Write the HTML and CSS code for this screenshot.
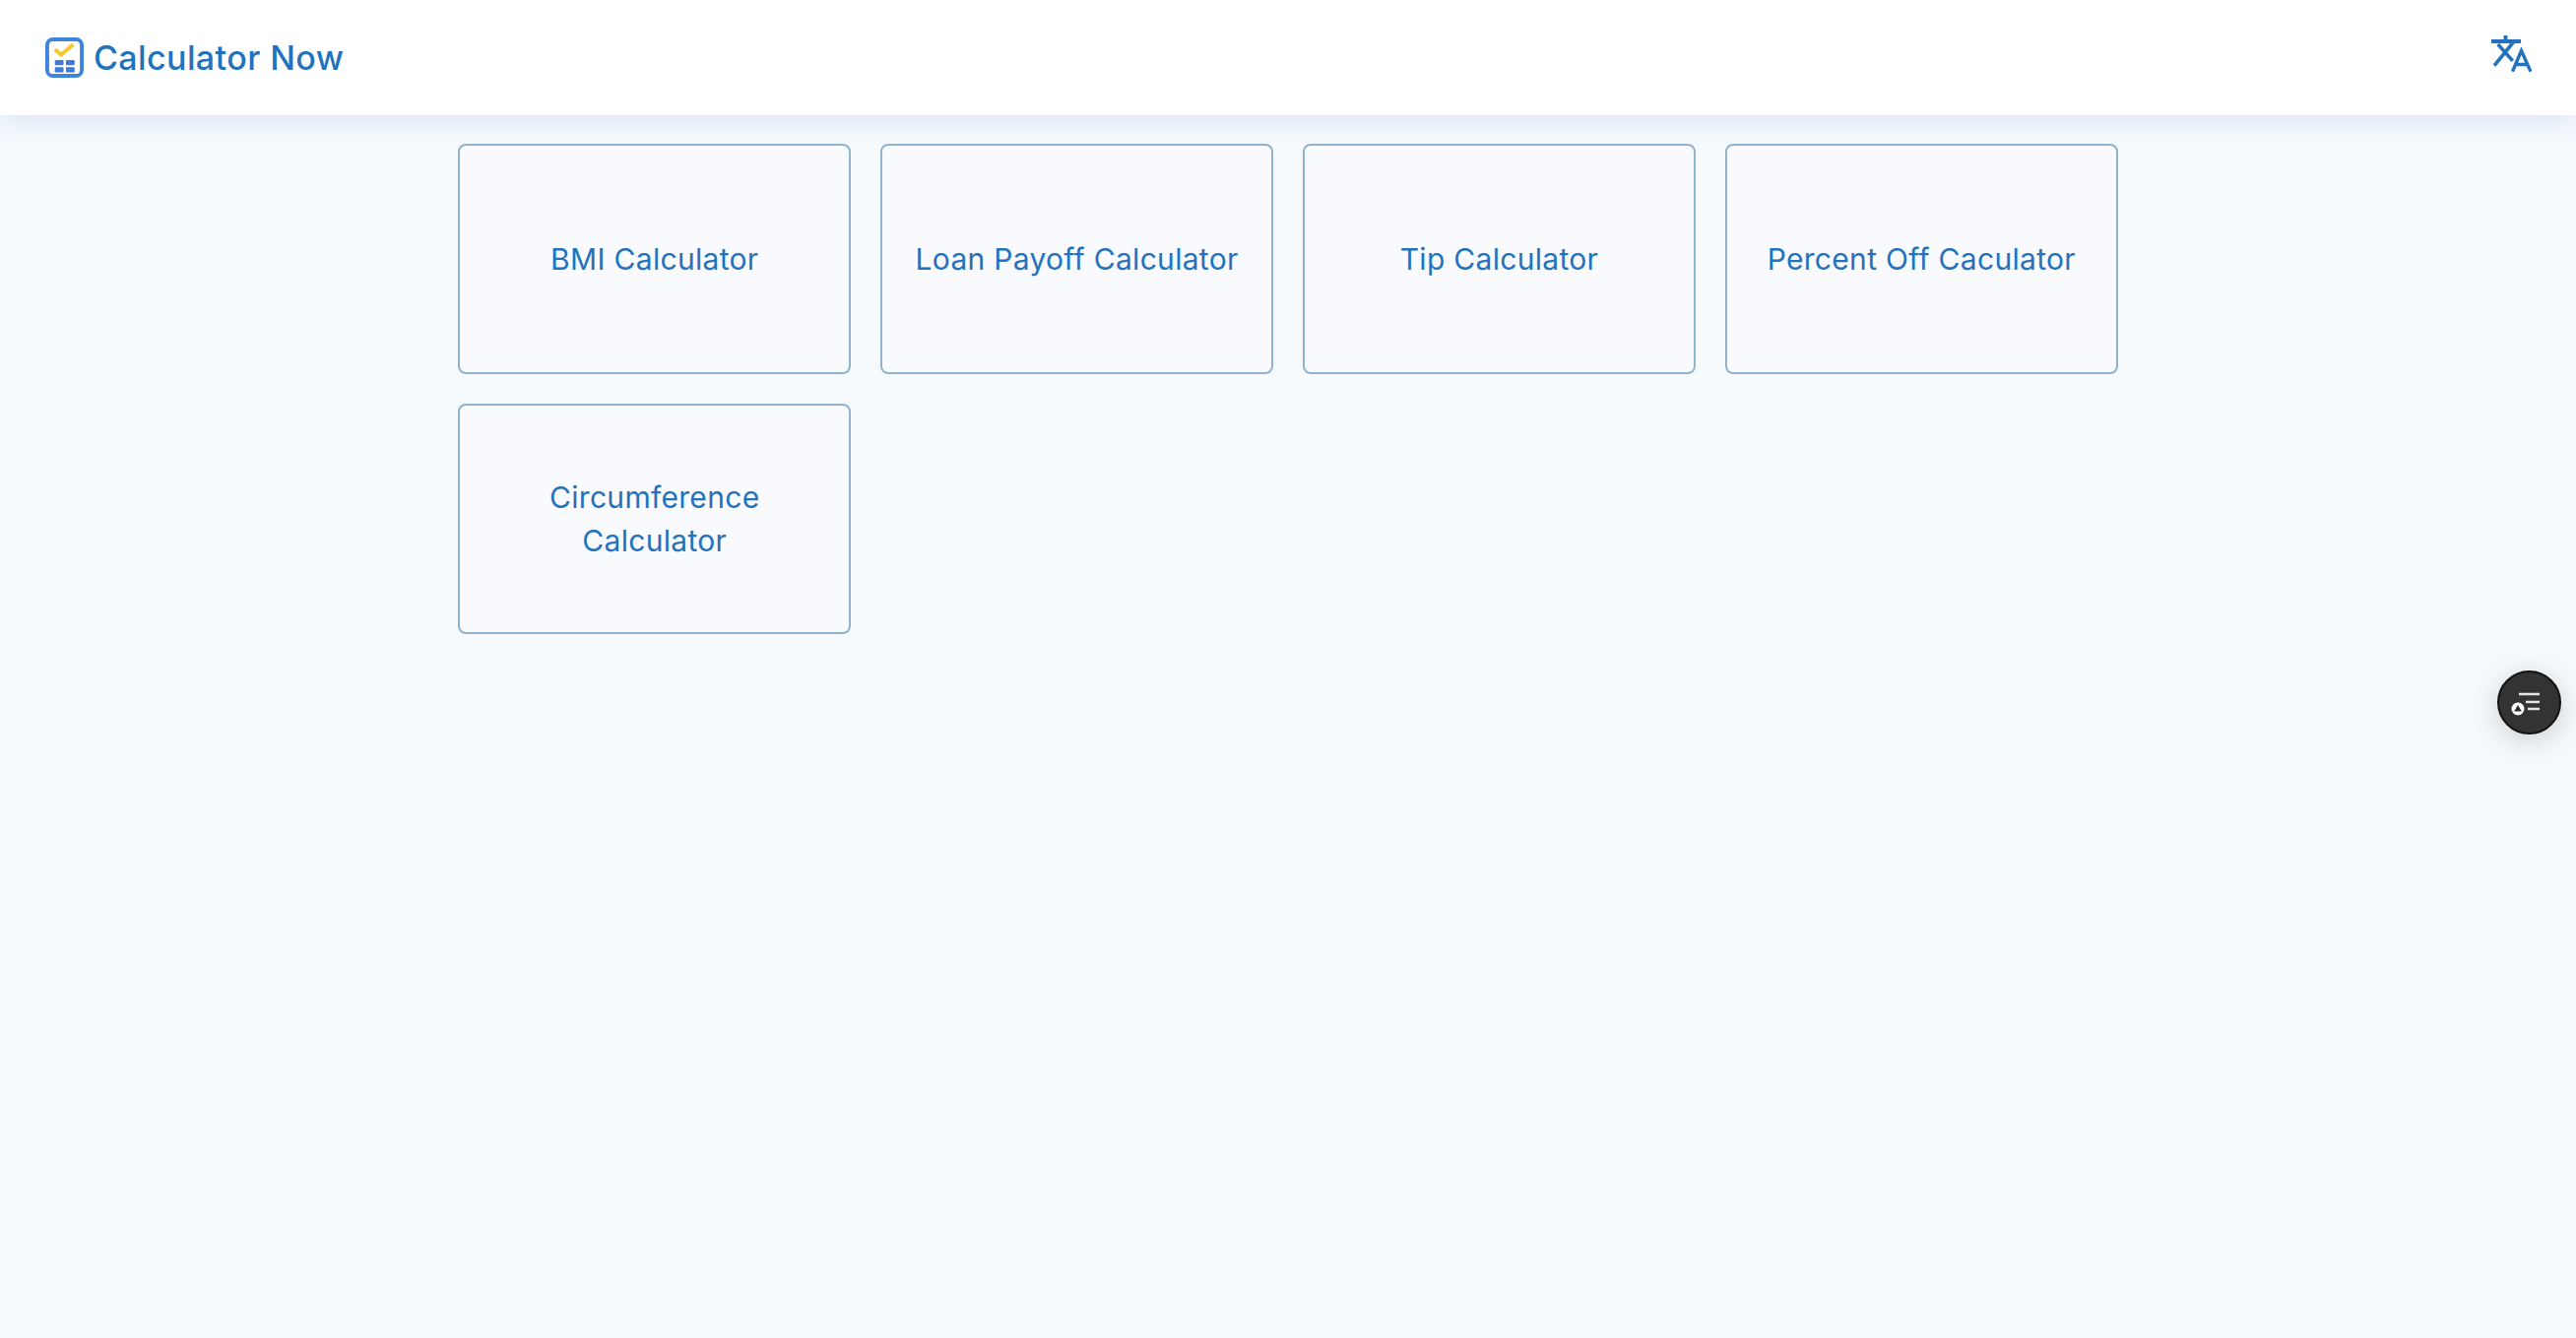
FILE: index.html
```html
<!DOCTYPE html>
<html lang="en">
<head>
<meta charset="utf-8">
<title>Calculator Now</title>
<link rel="stylesheet" href="styles.css">
</head>
<body>
<header class="topbar">
  <a class="brand" href="#">
    <svg class="brand-icon" viewBox="0 0 40 42" aria-hidden="true">
      <rect x="2" y="2" width="36" height="38" rx="6" fill="#fff" stroke="#3f84dc" stroke-width="4"/>
      <path d="M10 12.500l6.500 5.500L29 7.500" fill="none" stroke="#f4c92e" stroke-width="4"/>
      <rect x="10" y="23.500" width="9" height="5.500" rx="1" fill="#3f78d8"/>
      <rect x="21.500" y="23.500" width="9" height="5.500" rx="1" fill="#3f78d8"/>
      <rect x="10" y="31" width="9" height="5.500" rx="1" fill="#3f78d8"/>
      <rect x="21.500" y="31" width="9" height="5.500" rx="1" fill="#3f78d8"/>
    </svg>
    <span class="brand-name">Calculator Now</span>
  </a>
  <button class="lang" type="button" aria-label="Language">
    <svg viewBox="0 0 41 37" class="lang-icon" aria-hidden="true">
      <path d="M0 6h30M14.500 0v6" fill="none" stroke="#2272bd" stroke-width="3.800"/>
      <path d="M23 6L3 30.700M6.700 9l15 16.700" fill="none" stroke="#2272bd" stroke-width="3.600"/>
      <path d="M21.500 36.700L30.500 15.500L40 36.700M24.500 29.500h12.500" fill="none" stroke="#2272bd" stroke-width="3.400"/>
    </svg>
  </button>
</header>
<main class="grid">
  <a class="card" href="#">BMI Calculator</a>
  <a class="card" href="#">Loan Payoff Calculator</a>
  <a class="card" href="#">Tip Calculator</a>
  <a class="card" href="#">Percent Off Caculator</a>
  <a class="card" href="#">Circumference Calculator</a>
</main>
<button class="fab" type="button" aria-label="Tasks">
  <svg viewBox="0 0 30 27" class="fab-icon" aria-hidden="true">
    <path d="M8 4h21M15 12h14M17 19h12" stroke="#e4e4e4" stroke-width="2.600" fill="none"/>
    <circle cx="7" cy="19" r="6.500" fill="#fff"/>
    <path d="M7 15l3.800 6.500h-7.600z" fill="#2c2c2c"/>
  </svg>
</button>
</body>
</html>
```
FILE: styles.css
```css
* { box-sizing: border-box; }
html, body { height: 100%; }
body {
  margin: 0;
  background: #f7fafd;
  font-family: Inter, "Liberation Sans", sans-serif;
  color: #2272bd;
  overflow: hidden;
}
.topbar {
  height: 117px;
  background: #fff;
  display: flex;
  align-items: center;
  justify-content: space-between;
  padding: 0 45px 0 46px;
  box-shadow: 0 4px 30px rgba(90, 130, 210, 0.2);
}
.brand {
  display: flex;
  align-items: center;
  gap: 10px;
  text-decoration: none;
  color: inherit;
}
.brand-icon { width: 39px; height: 41px; display: block; }
.brand-name { font-size: 34px; font-weight: 500; letter-spacing: 0.4px; margin-top: -1px; }
.lang {
  border: 0;
  padding: 0;
  background: none;
  margin-top: -8px;
}
.lang-icon { width: 41px; height: 37px; display: block; }
.grid {
  width: 1686px;
  margin: 29px 0 0 465px;
  display: grid;
  grid-template-columns: repeat(4, 1fr);
  gap: 30px 29.400px;
}
.card {
  height: 234px;
  display: flex;
  align-items: center;
  justify-content: center;
  text-align: center;
  padding: 0 30px;
  border: 2px solid #8fb3cf;
  border-radius: 8px;
  background: #f8fafe;
  color: #2272bd;
  text-decoration: none;
  font-size: 30px;
  letter-spacing: 0.3px;
  line-height: 44px;
}
.fab {
  position: fixed;
  left: 2535.500px;
  top: 681px;
  width: 65px;
  height: 65px;
  border-radius: 50%;
  border: 2px solid #111;
  background: #333;
  padding: 0;
  display: flex;
  align-items: center;
  justify-content: center;
  box-shadow: 0 6px 30px rgba(0, 0, 0, 0.18);
}
.fab-icon { width: 30px; height: 27px; display: block; margin: 2px 6px 0 0; }
```
